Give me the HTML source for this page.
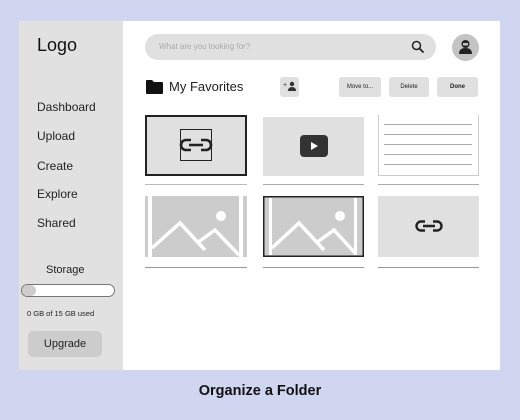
<!DOCTYPE html><html><head><style>
*{margin:0;padding:0;box-sizing:border-box}
body{width:520px;height:420px;background:#d0d6f0;font-family:"Liberation Sans",sans-serif;position:relative;overflow:hidden;color:#111}
.a{position:absolute}
.side{left:19px;top:21px;width:104px;height:349px;background:#e1e1e1}
.main{left:123px;top:21px;width:377px;height:349px;background:#fff}
.nav{left:37px;font-size:12px;color:#222}
.btn{background:#e0e0e0;border-radius:3px;font-size:6px;text-align:center;line-height:20px;height:20px;top:77px;color:#222}
.card{background:#e0e0e0}
.line{height:1px;background:#999}
</style></head><body>
<div class="a side"></div><div class="a main"></div>
<div class="a" style="left:37px;top:35px;font-size:18px;color:#111">Logo</div>
<div class="a nav" style="top:100px">Dashboard</div>
<div class="a nav" style="top:129px">Upload</div>
<div class="a nav" style="top:159px">Create</div>
<div class="a nav" style="top:187px">Explore</div>
<div class="a nav" style="top:216px">Shared</div>
<div class="a" style="left:46px;top:264px;font-size:11px;color:#222">Storage</div>
<div class="a" style="left:21px;top:284px;width:94px;height:13px;border:1px solid #777;border-radius:7px;background:#fff"></div>
<div class="a" style="left:22px;top:285px;width:14px;height:11px;border-radius:6px;background:#ccc"></div>
<div class="a" style="left:27px;top:309px;font-size:7.5px;color:#222">0 GB of 15 GB used</div>
<div class="a" style="left:28px;top:331px;width:74px;height:26px;border-radius:5px;background:#ccc;font-size:11px;text-align:center;line-height:26px;color:#222">Upgrade</div>

<div class="a" style="left:145px;top:34px;width:291px;height:26px;border-radius:13px;background:#e0e0e0"></div>
<div class="a" style="left:159px;top:42px;font-size:8px;color:#aaa">What are you looking for?</div>
<svg class="a" style="left:411px;top:40px" width="14" height="14" viewBox="0 0 14 14"><circle cx="5.5" cy="5.5" r="4" fill="none" stroke="#222" stroke-width="1.5"/><line x1="8.5" y1="8.5" x2="12.5" y2="12.5" stroke="#222" stroke-width="1.8"/></svg>
<div class="a" style="left:452px;top:34px;width:27px;height:27px;border-radius:50%;background:#c4c4c4"></div>
<svg class="a" style="left:458px;top:39px" width="15" height="16" viewBox="0 0 15 16"><circle cx="7.5" cy="5" r="4" fill="#222"/><rect x="5" y="4" width="5" height="2.5" fill="#c4c4c4"/><path d="M1 15 Q1 9 7.5 9 Q14 9 14 15Z" fill="#222"/></svg>

<svg class="a" style="left:146px;top:80px" width="17" height="14" viewBox="0 0 17 14"><path d="M0 1 Q0 0 1 0 H6 L8 2 H16 Q17 2 17 3 V13 Q17 14 16 14 H1 Q0 14 0 13Z" fill="#111"/></svg>
<div class="a" style="left:169px;top:79px;font-size:13px;color:#222">My Favorites</div>
<div class="a btn" style="left:280px;width:19px"></div>
<svg class="a" style="left:283px;top:81px" width="14" height="11" viewBox="0 0 14 11"><text x="0" y="6" font-size="7" fill="#333" font-family="Liberation Sans">+</text><circle cx="9" cy="3" r="2.2" fill="#333"/><path d="M5 10 Q5 6 9 6 Q13 6 13 10Z" fill="#333"/></svg>
<div class="a btn" style="left:339px;width:42px">Move to...</div>
<div class="a btn" style="left:389px;width:40px">Delete</div>
<div class="a btn" style="left:437px;width:41px;font-weight:bold">Done</div>

<div class="a card" style="left:145px;top:115px;width:102px;height:61px;border:2px solid #222"></div>
<div class="a" style="left:180px;top:129px;width:32px;height:32px;border:1.5px solid #222"></div>
<svg class="a" style="left:178px;top:138px" width="36" height="14" viewBox="0 0 36 14"><path d="M13 2 H8 A5 5 0 0 0 8 12 H13 M23 2 H28 A5 5 0 0 1 28 12 H23 M11 7 H25" fill="none" stroke="#222" stroke-width="2.6"/></svg>
<div class="a card" style="left:263px;top:117px;width:101px;height:59px"></div>
<div class="a" style="left:300px;top:135px;width:28px;height:22px;border-radius:4px;background:#333"></div>
<svg class="a" style="left:310px;top:141px" width="9" height="10"><path d="M1 1 L8 5 L1 9Z" fill="#fff"/></svg>
<div class="a" style="left:378px;top:115px;width:101px;height:61px;border:1px solid #ccc;border-top:none;background:#fff"></div>
<div class="a line" style="left:384px;top:124px;width:88px;background:#aaa"></div>
<div class="a line" style="left:384px;top:134px;width:88px;background:#aaa"></div>
<div class="a line" style="left:384px;top:144px;width:88px;background:#aaa"></div>
<div class="a line" style="left:384px;top:154px;width:88px;background:#aaa"></div>
<div class="a line" style="left:384px;top:164px;width:88px;background:#aaa"></div>
<div class="a line" style="left:145px;top:184px;width:102px;background:#bbb"></div>
<div class="a line" style="left:263px;top:184px;width:101px;background:#aaa"></div>
<div class="a line" style="left:378px;top:184px;width:101px;background:#aaa"></div>

<svg class="a" style="left:145px;top:196px" width="102" height="61" viewBox="0 0 102 61"><rect width="102" height="61" fill="#ccc"/><rect x="3" width="4" height="61" fill="#fff"/><rect x="94" width="4" height="61" fill="#fff"/><polyline points="7,52 35,27 60,54" fill="none" stroke="#fff" stroke-width="3.5"/><polyline points="52,47 70,34 94,59" fill="none" stroke="#fff" stroke-width="3.5"/><circle cx="76" cy="20" r="5" fill="#fff"/></svg>
<svg class="a" style="left:263px;top:196px" width="101" height="61" viewBox="0 0 101 61"><rect width="101" height="61" fill="#ccc" stroke="#222" stroke-width="3"/><rect x="6" y="2" width="3" height="57" fill="#fff"/><rect x="91" y="2" width="3" height="57" fill="#fff"/><polyline points="9,52 36,27 61,54" fill="none" stroke="#fff" stroke-width="3.5"/><polyline points="53,47 71,34 92,57" fill="none" stroke="#fff" stroke-width="3.5"/><circle cx="77" cy="20" r="5" fill="#fff"/></svg>
<div class="a card" style="left:378px;top:196px;width:101px;height:61px"></div>
<svg class="a" style="left:414px;top:220px" width="30" height="12" viewBox="0 0 30 12"><path d="M11 1.5 H7 A4.5 4.5 0 0 0 7 10.5 H11 M19 1.5 H23 A4.5 4.5 0 0 1 23 10.5 H19 M9 6 H21" fill="none" stroke="#222" stroke-width="2.4"/></svg>
<div class="a line" style="left:145px;top:267px;width:102px"></div>
<div class="a line" style="left:263px;top:267px;width:101px"></div>
<div class="a line" style="left:378px;top:267px;width:101px"></div>

<div class="a" style="left:0;top:383px;width:520px;text-align:center;font-size:14.5px;font-weight:bold;color:#111">Organize a Folder</div>
</body></html>
